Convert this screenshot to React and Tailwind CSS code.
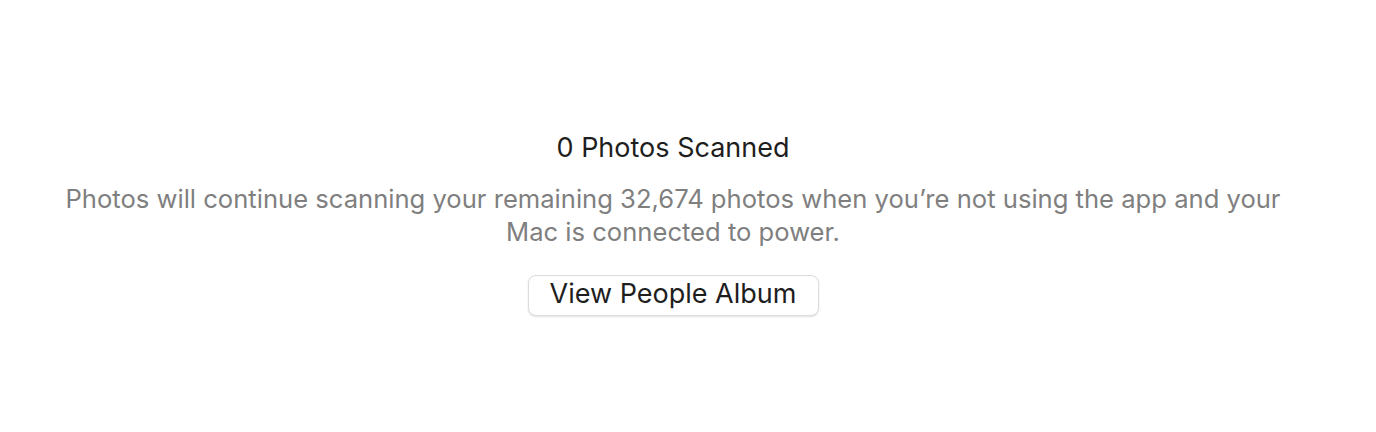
export default function App() {
  return (
    <div className="w-[1376px] h-[432px] bg-white flex flex-col items-center pt-[130px] pr-[30px] font-['Inter','Liberation_Sans',sans-serif]">
      <h1 className="text-[27px] leading-[36px] text-[#1e1e1e] font-normal">0 Photos Scanned</h1>
      <p className="mt-[16px] text-[25.6px] leading-[33px] text-[#7f7f7f] text-center">
        Photos will continue scanning your remaining 32,674 photos when you’re not using the app and your
        <br />
        Mac is connected to power.
      </p>
      <button className="mt-[27px] h-[41px] w-[291px] pb-[3px] rounded-[8px] bg-white border border-[#dcdcdc] shadow-[0_1px_2px_rgba(0,0,0,0.12)] text-[27px] leading-[36px] text-[#1e1e1e]">
        View People Album
      </button>
    </div>
  );
}
